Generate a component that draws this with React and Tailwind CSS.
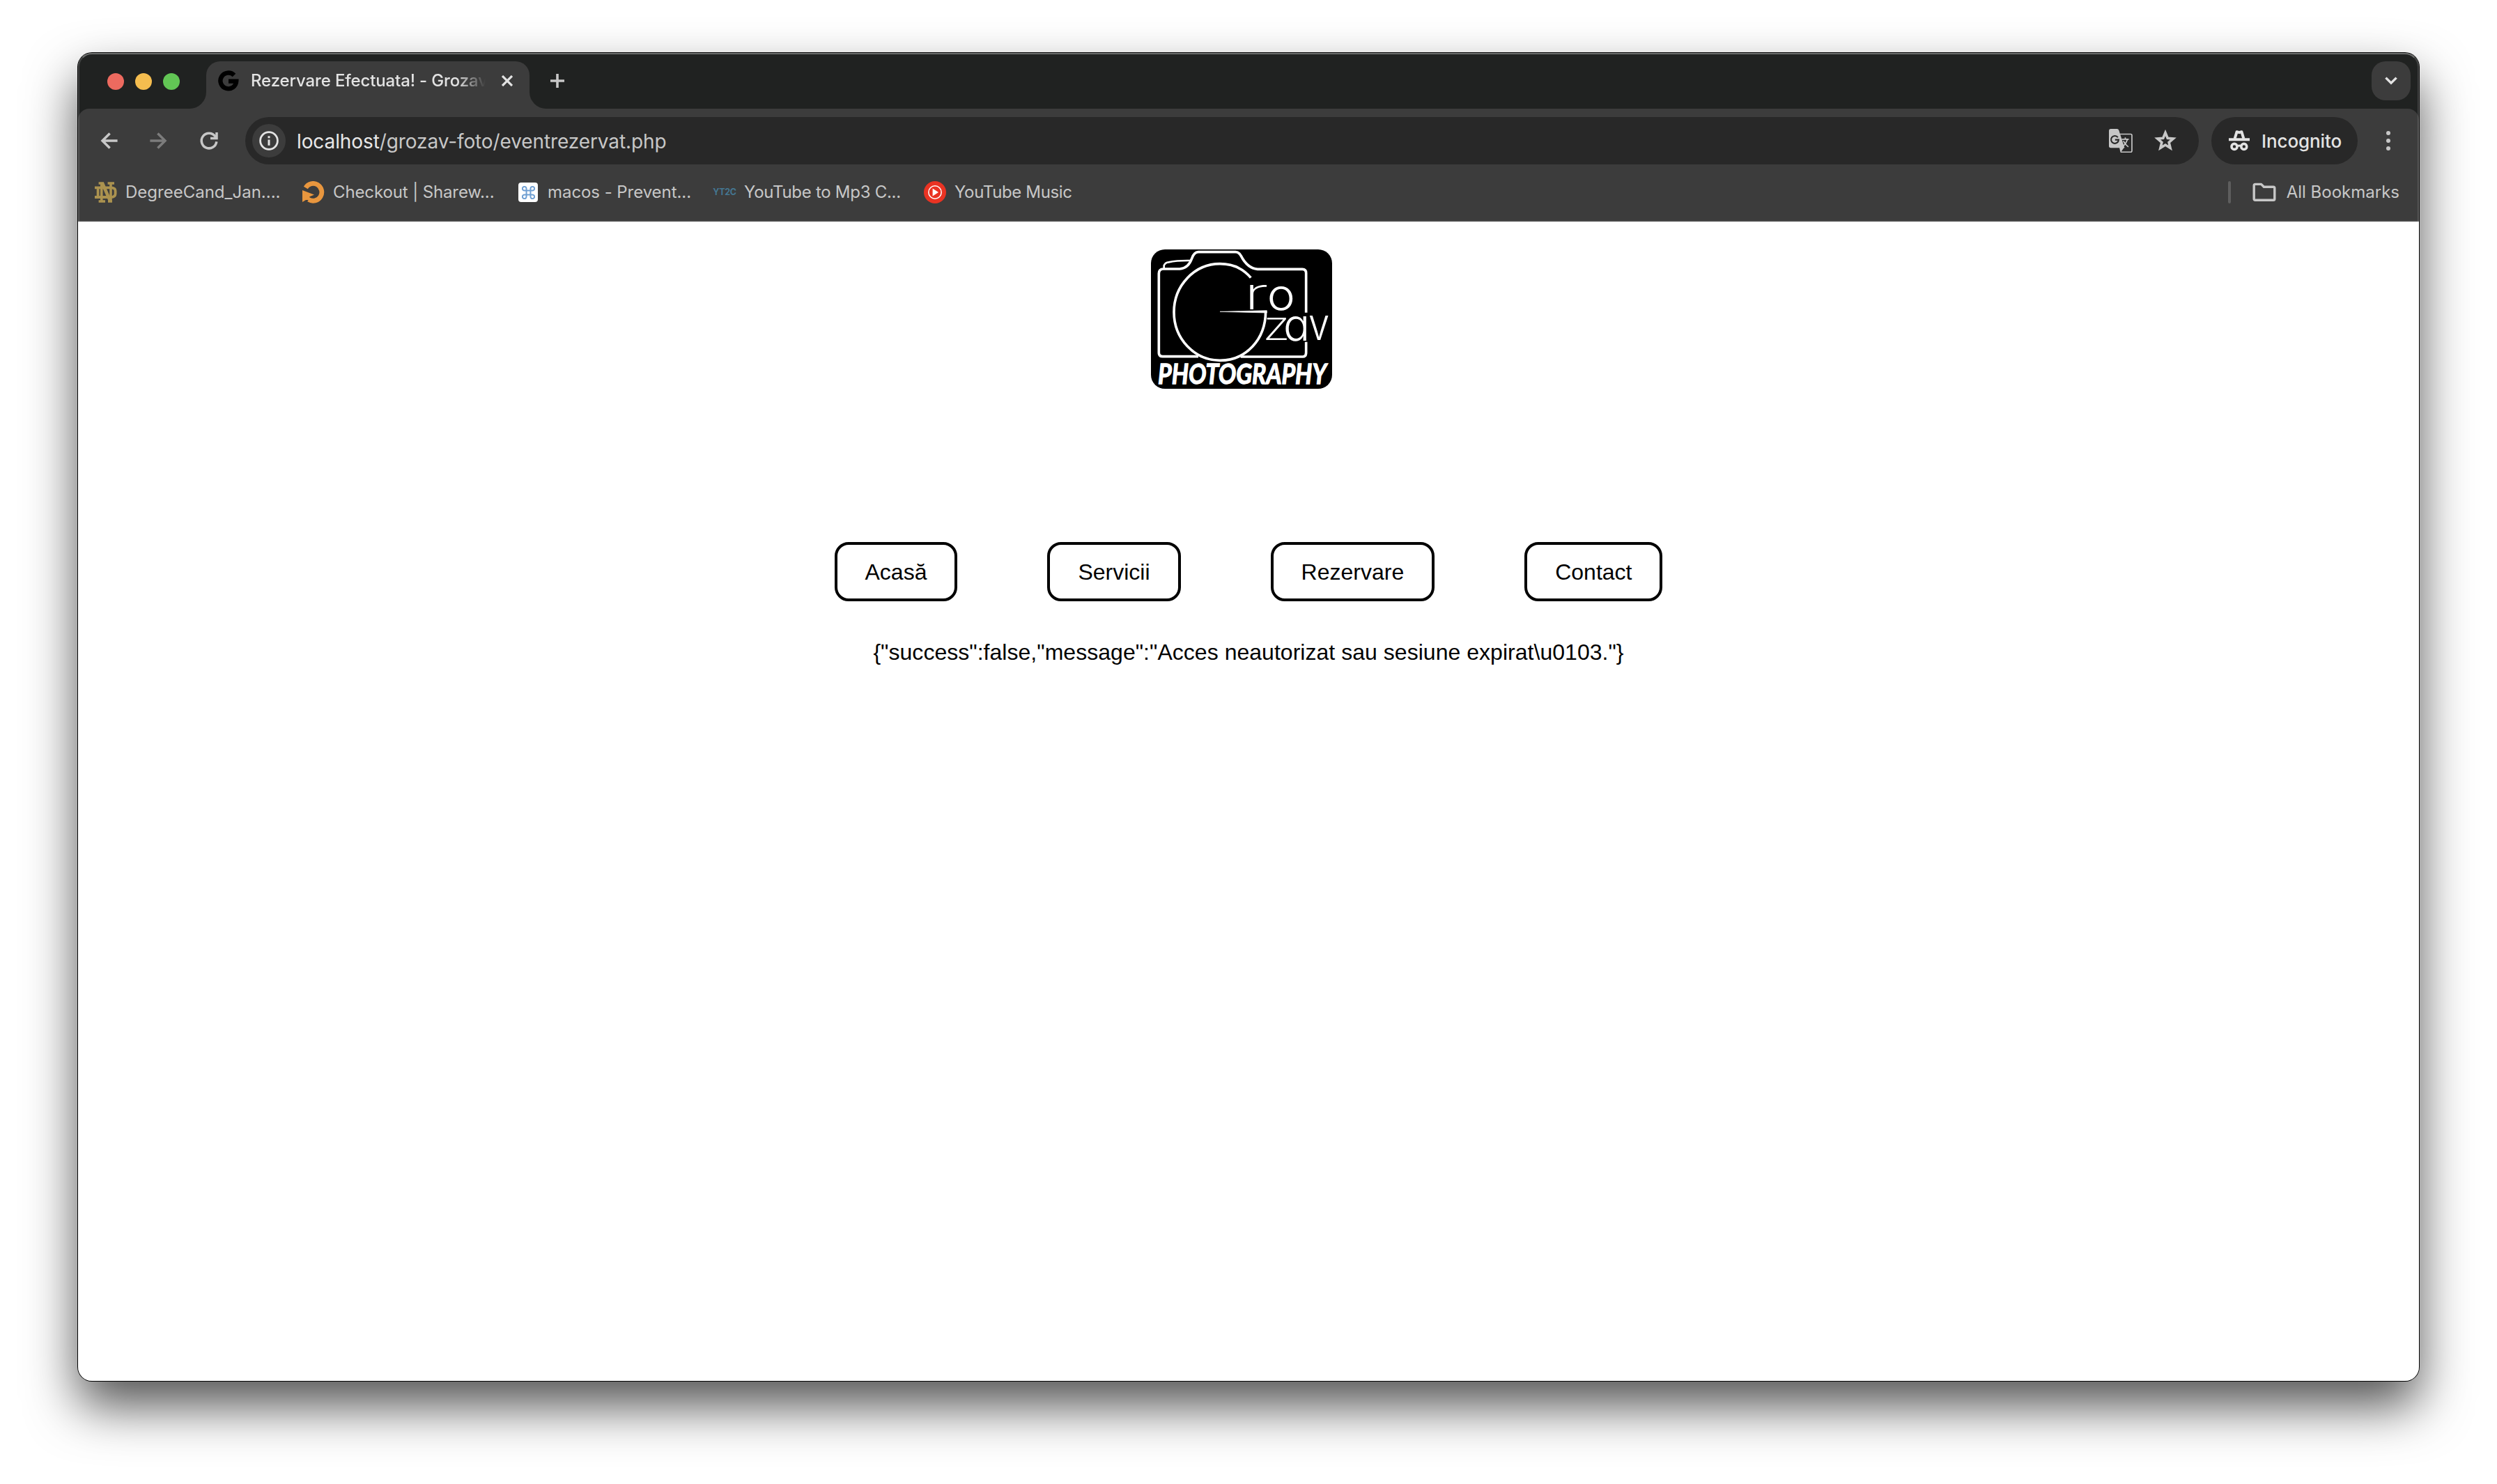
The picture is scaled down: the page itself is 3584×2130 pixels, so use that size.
function BackArrow({ className }) {
  return (
    <svg viewBox="0 0 32 32" className={className} fill="none" stroke="currentColor" strokeWidth="3.5">
      <path d="M17.6 5.4 7 16 17.6 26.6M7 16H28.6" />
    </svg>
  );
}

function ReloadIcon() {
  return (
    <svg viewBox="0 0 32 32" className="size-8" fill="none" stroke="currentColor" strokeWidth="3.5">
      <path d="M26.8 17.2A10.8 10.8 0 1 1 24.6 9.4L26.6 12.6" />
      <path d="M27 4V12.6H18" />
    </svg>
  );
}

function InfoIcon() {
  return (
    <svg viewBox="0 0 28 28" className="size-7" fill="none" stroke="currentColor">
      <circle cx="14" cy="14" r="12.4" strokeWidth="2.8" />
      <path d="M14 12.4V20.8" strokeWidth="3" />
      <path d="M14 7.2V10.2" strokeWidth="3" />
    </svg>
  );
}

function TranslateIcon() {
  return (
    <svg viewBox="142 358 100 100" className="size-[34px]" fill="none">
      <path d="M188 380H234Q239 380 239 385V451Q239 456 234 456H192" stroke="#c7c7c7" strokeWidth="5" />
      <path d="M150 358H176Q182 358 184 364L208 438H150Q142 438 142 430V366Q142 358 150 358Z" fill="#c7c7c7" />
      <path d="M186 437H206L191 458Z" fill="#c7c7c7" />
      <path d="M180 394A16 16 0 1 0 183 404H168" stroke="#282828" strokeWidth="6" />
      <path d="M196 402H226M211 394V402M220 402Q214 422 200 432M203 409Q211 424 224 434" stroke="#c7c7c7" strokeWidth="5" />
    </svg>
  );
}

function StarIcon() {
  return (
    <svg viewBox="0 0 34 34" className="size-[34px]" fill="none" stroke="currentColor" strokeWidth="3.6">
      <path d="M17 5.4 20.2 13.2 28.4 13.9 22.1 19.3 24.1 27.4 17 23 9.9 27.4 11.9 19.3 5.6 13.9 13.8 13.2Z" />
    </svg>
  );
}

function IncognitoIcon() {
  return (
    <svg viewBox="0 0 30 30" className="size-[30px]" fill="none" stroke="currentColor">
      <path d="M8.6 12 11.6 2.2 15 3.2 18.4 2.2 21.4 12" strokeWidth="4" strokeLinejoin="round" />
      <path d="M0 13.2H30" strokeWidth="4" />
      <circle cx="8" cy="23.4" r="4" strokeWidth="3.6" />
      <circle cx="21.8" cy="23.4" r="4" strokeWidth="3.6" />
      <path d="M12 23Q15 21 18 23" strokeWidth="3" />
    </svg>
  );
}

function FolderIcon() {
  return (
    <svg viewBox="0 0 34 28" className="h-7 w-[34px]" fill="none" stroke="currentColor" strokeWidth="3.4" strokeLinejoin="round">
      <path d="M4 2.4H12.6L16.4 6.2H30Q31.8 6.2 31.8 8V23.4Q31.8 25.2 30 25.2H4Q2.2 25.2 2.2 23.4V4.2Q2.2 2.4 4 2.4Z" />
    </svg>
  );
}

function FaviconG() {
  return (
    <svg viewBox="0 0 30 30" className="size-[30px]" fill="none" stroke="#000" strokeWidth="6.4">
      <path d="M23 7A11.4 11.4 0 1 0 26.2 15.6H15" />
    </svg>
  );
}

function NotreDameIcon() {
  return (
    <svg viewBox="0 0 32 30" className="h-[30px] w-8" fill="none" stroke="#ab924f">
      <path d="M0 8.4H23Q29.6 8.4 29.6 13V17Q29.6 22 23 22H0M4.6 8V22" strokeWidth="3.8" />
      <path d="M9.8 2V28M23 2V28" strokeWidth="3.6" />
      <path d="M11 2 22.4 28" strokeWidth="4.6" />
      <path d="M5.6 2H13M18.6 2H28M5.6 28H15M19 28H25" strokeWidth="3.4" />
    </svg>
  );
}

function SharewareIcon() {
  return (
    <svg viewBox="0 0 32 32" className="size-8">
      <path d="M4.8 9.4A12.4 12.4 0 1 1 9 26.4" fill="none" stroke="#e8963e" strokeWidth="6.8" />
      <path d="M0 13 17 19.5 10 22.5 13 27 5 27 0 30Z" fill="#e8963e" />
    </svg>
  );
}

function CommandIcon() {
  return (
    <span className="mx-0.5 flex size-7 items-center justify-center rounded-[4px] bg-white">
      <svg viewBox="0 0 18 18" className="size-[19px]" fill="none" stroke="#6f9fd2" strokeWidth="1.9">
        <path d="M6.2 6.2V3.7A2.7 2.7 0 1 0 3.7 6.2H14.3A2.7 2.7 0 1 0 11.8 3.7V14.3A2.7 2.7 0 1 0 14.3 11.8H3.7A2.7 2.7 0 1 0 6.2 14.3Z" />
      </svg>
    </span>
  );
}

function ConverterIcon() {
  return (
    <span className="flex w-8 justify-center text-[12.5px] font-bold leading-none text-[#447691] font-['Inter',sans-serif]">
      YT2C
    </span>
  );
}

function MusicIcon() {
  return (
    <svg viewBox="0 0 32 32" className="size-8">
      <circle cx="16" cy="16" r="16" fill="#ea3323" />
      <circle cx="16" cy="16" r="9.2" fill="none" stroke="#fff" strokeWidth="1.5" />
      <path d="M12.6 10.6 21 16 12.6 21.4Z" fill="#fff" />
    </svg>
  );
}

const bookmarks = [
  { label: "DegreeCand_Jan....", icon: NotreDameIcon, className: "w-[298px]" },
  { label: "Checkout | Sharew...", icon: SharewareIcon, className: "w-[308px] tracking-[-0.12px]" },
  { label: "macos - Prevent...", icon: CommandIcon, className: "w-[282px] tracking-[-0.06px]" },
  { label: "YouTube to Mp3 C...", icon: ConverterIcon, className: "w-[302px] tracking-[-0.28px]" },
  { label: "YouTube Music", icon: MusicIcon, className: "w-[240px] tracking-[-0.35px]" },
];

function TabStrip() {
  return (
    <div className="flex h-20 items-start bg-[#202221] pl-[42px] pr-3">
      <div className="mt-[29px] flex gap-4">
        <span className="size-6 rounded-full bg-[#ed6a5f]" />
        <span className="size-6 rounded-full bg-[#f5bd4f]" />
        <span className="size-6 rounded-full bg-[#62c655]" />
      </div>
      <div className="relative ml-[38px] mt-3 h-[68px] w-[464px] rounded-t-[20px] bg-[#3c3c3c]">
        <span className="absolute -left-6 bottom-0 size-6 bg-[#3c3c3c]">
          <span className="block size-full rounded-br-[24px] bg-[#202221]" />
        </span>
        <span className="absolute -right-6 bottom-0 size-6 bg-[#3c3c3c]">
          <span className="block size-full rounded-bl-[24px] bg-[#202221]" />
        </span>
        <div className="flex h-14 items-center pl-[17px]">
          <FaviconG />
          <span className="ml-[17px] w-[337px] overflow-hidden whitespace-nowrap text-[24px] font-[450] leading-8 tracking-[-0.14px] text-[#e3e3e3] [mask-image:linear-gradient(to_right,#000_296px,transparent_337px)]">
            Rezervare Efectuata! - Grozav
          </span>
          <svg viewBox="0 0 16 16" className="ml-[23px] size-4 text-[#e3e3e3]" fill="none" stroke="currentColor" strokeWidth="3.2">
            <path d="M1 1 15 15M15 1 1 15" />
          </svg>
        </div>
      </div>
      <svg viewBox="0 0 20 20" className="ml-[30px] mt-[30px] size-5 text-[#c7c7c7]" fill="none" stroke="currentColor" strokeWidth="3.6">
        <path d="M10 0V20M0 10H20" />
      </svg>
      <button className="ml-auto mt-3 flex size-14 items-center justify-center rounded-[20px] bg-[#3c3c3c] text-[#e3e3e3]">
        <svg viewBox="0 0 18 12" className="h-3 w-[18px]" fill="none" stroke="currentColor" strokeWidth="3.4">
          <path d="M1.4 1.6 9 9.2 16.6 1.6" />
        </svg>
      </button>
    </div>
  );
}

function Toolbar() {
  return (
    <div className="flex h-[92px] items-center rounded-t-[16px] bg-[#3c3c3c] pl-7 pr-10 text-[#c7c7c7]">
      <BackArrow className="size-8" />
      <BackArrow className="ml-10 size-8 -scale-x-100 text-[#7c7c7c]" />
      <span className="ml-10">
        <ReloadIcon />
      </span>
      <div className="ml-9 flex h-[68px] flex-1 items-center rounded-full bg-[#282828] pl-2.5 pr-[31px]">
        <span className="flex size-12 items-center justify-center rounded-full bg-[#3c3c3c] text-[#e3e3e3]">
          <InfoIcon />
        </span>
        <span className="ml-4 mt-px text-[28px] leading-9 tracking-[-0.1px]">
          <span className="text-[#e8e8e8]">localhost</span>/grozav-foto/eventrezervat.php
        </span>
        <span className="ml-auto">
          <TranslateIcon />
        </span>
        <span className="-mt-px ml-[30px]">
          <StarIcon />
        </span>
      </div>
      <div className="ml-[18px] flex h-[68px] w-[210px] items-center rounded-full bg-[#282828] pl-[25px] text-[#e3e3e3]">
        <IncognitoIcon />
        <span className="ml-[17px] mt-px text-[26px] font-[450] leading-8 tracking-[-0.1px]">Incognito</span>
      </div>
      <div className="ml-10 flex w-2 flex-col items-center gap-[5px]">
        <span className="size-1.5 rounded-full bg-[#c7c7c7]" />
        <span className="size-1.5 rounded-full bg-[#c7c7c7]" />
        <span className="size-1.5 rounded-full bg-[#c7c7c7]" />
      </div>
    </div>
  );
}

function BookmarksBar() {
  return (
    <div className="flex h-[70px] items-start border-b-2 border-[#474747] bg-[#3c3c3c] pl-6 pr-7 text-[24px] leading-8 text-[#c7c7c7]">
      {bookmarks.map(({ label, icon: Icon, className }) => (
        <div key={label} className={`flex h-14 shrink-0 items-center gap-3 whitespace-nowrap ${className}`}>
          <Icon />
          <span>{label}</span>
        </div>
      ))}
      <div className="ml-auto flex h-14 items-center">
        <span className="h-8 w-1 rounded-full bg-[#5e5e5e]" />
        <span className="ml-[31px]">
          <FolderIcon />
        </span>
        <span className="ml-[15px]">All Bookmarks</span>
      </div>
    </div>
  );
}

function GrozavLogo() {
  return (
    <div className="mr-5 h-[200px] w-[260px] overflow-hidden rounded-[20px] bg-black">
      <svg viewBox="36 36 780 600" className="size-full" fill="none" stroke="#fff" strokeWidth="11">
        <path d="M240 497H86Q70 497 70 480V140Q70 120 90 120H160C190 118 205 95 212 75Q222 47 240 47H400Q415 47 424 64C440 95 460 118 495 121H688Q704 121 704 138V308" />
        <path d="M704 434V480Q704 498 690 498H422" />
        <path d="M92 118V105Q98 92 112 91Q150 83 205 84" strokeWidth="8" />
        <path d="M466 158C430 115 380 98 333 98A198 208 0 0 0 333 514C446 514 529 424 530 304" />
        <path d="M333 304 535 299V309Z" fill="#fff" stroke="#fff" strokeWidth="2" />
        <g fill="#fff" stroke="none" className="font-['Inter',sans-serif] font-light [font-feature-settings:'cv11']">
          <text transform="translate(435 295) scale(1.65 1)" fontSize="190" className="font-extralight">r</text>
          <text transform="translate(536 296) scale(1.08 1)" fontSize="188">o</text>
          <text transform="translate(516 425) scale(1.3 1)" fontSize="174" className="font-extralight">z</text>
          <text x="606" y="430" fontSize="190">a</text>
          <text transform="translate(714 425) scale(0.86 1)" fontSize="190">v</text>
        </g>
        <text
          x="66"
          y="614"
          fontSize="122"
          fill="#fff"
          stroke="#fff"
          strokeWidth="4"
          textLength="726"
          lengthAdjust="spacingAndGlyphs"
          className="font-['Lato',sans-serif] font-bold italic"
        >
          PHOTOGRAPHY
        </text>
      </svg>
    </div>
  );
}

const links = ["Acasă", "Servicii", "Rezervare", "Contact"];

function Page() {
  return (
    <main className="flex flex-1 flex-col items-center bg-white pt-10 text-[32px] leading-[normal] text-black font-['Liberation_Sans',Arial,sans-serif]">
      <GrozavLogo />
      <nav className="mt-[220px] flex gap-[129px]">
        {links.map((link) => (
          <a key={link} className="rounded-[20px] border-4 border-black px-10 pb-[19px] pt-[21px]">
            {link}
          </a>
        ))}
      </nav>
      <p className="mt-[55px] tracking-[0.03px]">{'{"success":false,"message":"Acces neautorizat sau sesiune expirat\\u0103."}'}</p>
    </main>
  );
}

export default function App() {
  return (
    <div className="h-[2130px] w-[3584px] overflow-hidden bg-white px-28 pt-[76px] font-['Inter',sans-serif]">
      <div className="relative flex h-[1906px] w-full flex-col rounded-[20px] shadow-[0_0_0_1px_#000,0_36px_72px_rgba(0,0,0,0.68)]">
        <div className="flex flex-1 flex-col overflow-hidden rounded-[20px] bg-[#202221]">
          <TabStrip />
          <Toolbar />
          <BookmarksBar />
          <Page />
        </div>
        <div className="pointer-events-none absolute inset-x-0 top-0 h-[242px] rounded-t-[20px] border-x-2 border-t-2 border-x-white/15 border-t-white/35" />
      </div>
    </div>
  );
}
